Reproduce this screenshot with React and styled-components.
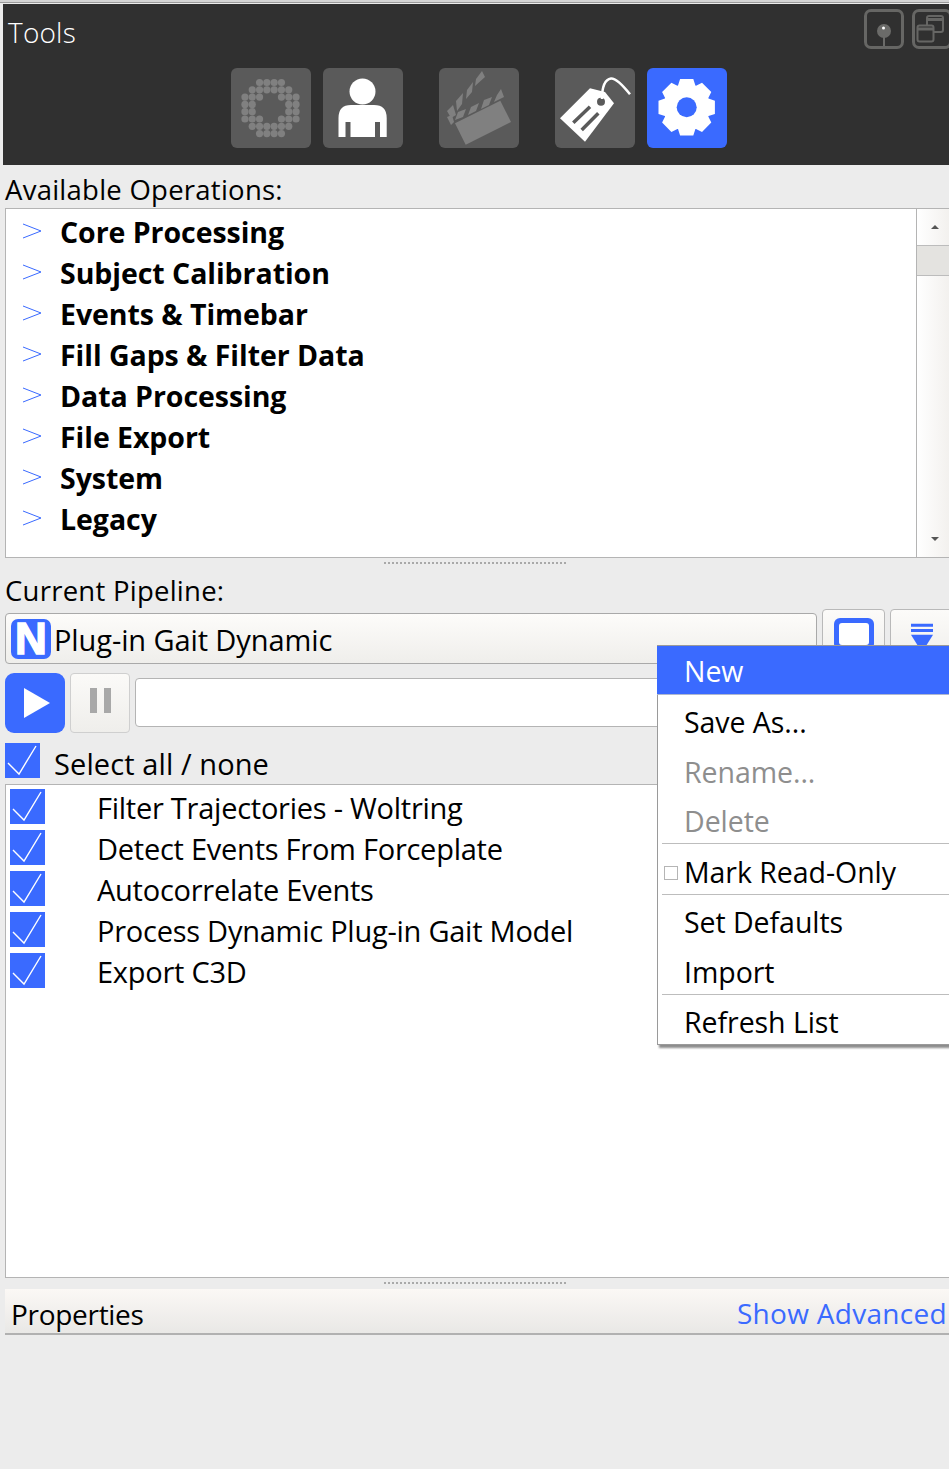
import React from "react";
import styled, { createGlobalStyle } from "styled-components";

const BLUE = "#3a6aff";
const FONT = `"Open Sans", "Noto Sans", sans-serif`;

const GlobalStyle = createGlobalStyle`
  html, body { margin: 0; padding: 0; background: #ececec; }
  body { font-family: ${FONT}; color: #000; overflow: hidden; }
  * { box-sizing: border-box; }
`;

const Page = styled.div`
  position: relative;
  width: 949px;
  height: 1469px;
  overflow: hidden;
  background: #ececec;
`;

const TopStrip = styled.div`
  height: 4px;
  background: linear-gradient(#d4d4d4 0, #d4d4d4 2px, #9b9b9b 2px, #9b9b9b 3px, #ececec 3px);
`;

const ToolsPanel = styled.section`
  height: 161px;
  margin-left: 3px;
  background: #303030;
  overflow: hidden;
`;

const ToolsHead = styled.div`
  display: flex;
  justify-content: space-between;
  height: 64px;
  padding: 5px 0 0 5px;
`;

const ToolsTitle = styled.h1`
  margin: -1px 0 0;
  font-size: 28px;
  font-weight: 300;
  line-height: 48px;
  color: #fff;
  letter-spacing: 0.2px;
`;

const WindowButtons = styled.div`
  display: flex;
  gap: 8px;
  margin-right: -3px;
`;

const WindowButton = styled.button`
  width: 40px;
  height: 40px;
  padding: 0;
  flex: none;
  background: transparent;
  border: 3px solid #666664;
  border-radius: 7px;
  svg { display: block; }
`;

const ToolRow = styled.div`
  display: flex;
  padding-left: 228px;
`;

const ToolButton = styled.button`
  width: 80px;
  height: 80px;
  padding: 0;
  flex: none;
  border: none;
  border-radius: 6px;
  margin-left: ${p => p.$gap}px;
  background: ${p => (p.$active ? BLUE : "#5a5a5a")};
  svg { display: block; }
`;

const Content = styled.main`
  padding-left: 5px;
`;

const SectionLabel = styled.div`
  font-size: 27.5px;
  line-height: 38px;
  letter-spacing: 0.25px;
  height: ${p => p.$h}px;
  padding-top: ${p => p.$top}px;
`;

const OperationsBox = styled.div`
  display: flex;
  width: 950px;
  height: 350px;
  background: #fff;
  border: 1px solid #b4b4b4;
`;

const OperationList = styled.ul`
  flex: 1;
  margin: 0;
  padding: 2px 0 0 16px;
  list-style: none;
`;

const OperationRow = styled.li`
  display: flex;
  align-items: center;
  gap: 18px;
  height: 41px;
  font-size: 28.5px;
  font-weight: 700;
  letter-spacing: -0.05px;
  svg { flex: none; margin-bottom: 1px; }
`;

const ScrollBar = styled.div`
  width: 37px;
  flex: none;
  display: flex;
  flex-direction: column;
  margin-right: 1px;
  border-left: 1px solid #b4b4b4;
  background: linear-gradient(90deg, #fff, #f1efec);
`;

const ScrollArrow = styled.div`
  height: ${p => p.$h}px;
  display: flex;
  align-items: center;
  justify-content: center;
  &::after {
    content: "";
    border-left: 4px solid transparent;
    border-right: 4px solid transparent;
    ${p => (p.$down ? "border-top: 4px solid #555;" : "border-bottom: 4px solid #555;")}
  }
`;

const ScrollThumb = styled.div`
  height: 31px;
  background: #e4e3e0;
  border-top: 1px solid #bcbcbc;
  border-bottom: 1px solid #bcbcbc;
`;

const ScrollSpacer = styled.div`
  flex: 1;
`;

const Splitter = styled.div`
  height: 10px;
  display: flex;
  justify-content: center;
  padding: 4px 2px 0 0;
  &::before {
    content: "";
    width: 184px;
    height: 2px;
    background: repeating-linear-gradient(90deg, #a9a9a9 0 2px, transparent 2px 4px);
  }
`;

const ComboRow = styled.div`
  display: flex;
  align-items: flex-start;
  height: 64px;
  margin-top: -4px;
`;

const Combo = styled.div`
  position: relative;
  display: flex;
  align-items: center;
  gap: 3px;
  flex: none;
  width: 812px;
  height: 51px;
  margin-top: 4px;
  padding: 1px 0 0 5px;
  border: 1px solid #a9a9a9;
  border-radius: 4px;
  background: linear-gradient(#fdfcfa, #efeeeb);
  font-size: 29px;
  letter-spacing: -0.1px;
`;

const NLogo = styled.span`
  display: flex;
  align-items: center;
  justify-content: center;
  width: 40px;
  height: 40px;
  flex: none;
  margin-top: -1px;
  background: ${BLUE};
  border-radius: 7px;
  border: 2px solid ${BLUE};
  color: #fff;
  font-family: "Liberation Sans", sans-serif;
  font-size: 44px;
  font-weight: 700;
  line-height: 36px;
  letter-spacing: 0;
  -webkit-text-stroke: 1.5px #fff;
`;

const ComboCaret = styled.svg`
  position: absolute;
  right: 6px;
  bottom: 8px;
`;

const SideButton = styled.button`
  display: flex;
  align-items: flex-start;
  justify-content: center;
  width: 63px;
  height: 55px;
  flex: none;
  margin-left: ${p => p.$gap}px;
  padding: 0;
  border: 1px solid #b9b9b9;
  border-radius: 4px;
  background: linear-gradient(#fcfbf9, #efeeeb);
  svg { display: block; }
`;

const RunRow = styled.div`
  display: flex;
  align-items: center;
  gap: 5px;
  height: 60px;
`;

const PlayButton = styled.button`
  width: 60px;
  height: 60px;
  flex: none;
  padding: 0 0 0 3px;
  border: none;
  border-radius: 9px;
  background: ${BLUE};
  svg { display: block; margin: auto; }
`;

const PauseButton = styled.button`
  display: flex;
  align-items: center;
  justify-content: center;
  gap: 7px;
  width: 60px;
  height: 60px;
  flex: none;
  padding: 0 0 5px;
  border: 1px solid #cfcfcf;
  border-radius: 4px;
  background: linear-gradient(#fbfaf8, #efeeeb);
  &::before, &::after {
    content: "";
    width: 7px;
    height: 25px;
    background: #a8a8a8;
  }
`;

const RunInput = styled.div`
  flex: none;
  width: 820px;
  height: 49px;
  margin-bottom: 1px;
  background: #fff;
  border: 1px solid #b4b4b4;
  border-radius: 4px;
`;

const CheckBox = styled.span`
  display: block;
  width: 35px;
  height: 35px;
  flex: none;
  background: ${BLUE};
  svg { display: block; }
`;

const SelectAll = styled.label`
  display: flex;
  align-items: center;
  height: 35px;
  margin-top: 10px;
  gap: 14px;
  font-size: 29px;
  letter-spacing: 0.1px;
`;

const SelectAllText = styled.span`
  padding-top: 6px;
`;

const StepBox = styled.div`
  width: 950px;
  height: 494px;
  margin-top: 6px;
  padding-top: 4px;
  background: #fff;
  border: 1px solid #b4b4b4;
`;

const StepRow = styled.div`
  display: flex;
  height: 41px;
  padding-left: 4px;
  gap: 52px;
  font-size: 29px;
  letter-spacing: -0.25px;
  line-height: 38px;
`;

const PropertiesBar = styled.div`
  display: flex;
  align-items: flex-end;
  justify-content: space-between;
  height: 46px;
  margin-top: 1px;
  padding: 0 2px 0 6px;
  border-bottom: 2px solid #b1b1b1;
  background: linear-gradient(#fbf8f5, #e9e8e6);
  font-size: 28px;
  letter-spacing: -0.3px;
  line-height: 37px;
`;

const AdvancedLink = styled.a`
  color: ${BLUE};
  line-height: 40px;
  letter-spacing: 0.3px;
`;

const Menu = styled.div`
  position: absolute;
  top: 645px;
  left: 657px;
  width: 296px;
  height: 400px;
  display: flex;
  flex-direction: column;
  background: #fff;
  border: 1px solid #9a9a9a;
  box-shadow: 2px 3px 2px rgba(0, 0, 0, 0.45);
  font-size: 28.5px;
  letter-spacing: -0.05px;
`;

const MenuHighlight = styled.div`
  display: flex;
  align-items: center;
  flex: none;
  height: 49px;
  margin: 0 0 0 -1px;
  padding: 2px 0 0 27px;
  background: ${BLUE};
  background-clip: padding-box;
  color: #fff;
  border-bottom: 1px solid #aeb7cf;
`;

const MenuItem = styled.div`
  position: relative;
  display: flex;
  align-items: center;
  flex: none;
  height: ${p => p.$h || 44}px;
  margin-top: ${p => p.$top}px;
  padding-left: 26px;
  color: ${p => (p.$disabled ? "#8e8e8e" : "#000")};
`;

const MenuCheck = styled.span`
  position: absolute;
  left: 6px;
  top: 17px;
  width: 14px;
  height: 14px;
  border: 1px solid #b5b5b5;
`;

const MenuSep = styled.div`
  flex: none;
  height: 1px;
  margin-left: 4px;
  background: #bdbdbd;
`;

const operations = [
  "Core Processing",
  "Subject Calibration",
  "Events & Timebar",
  "Fill Gaps & Filter Data",
  "Data Processing",
  "File Export",
  "System",
  "Legacy",
];

const steps = [
  "Filter Trajectories - Woltring",
  "Detect Events From Forceplate",
  "Autocorrelate Events",
  "Process Dynamic Plug-in Gait Model",
  "Export C3D",
];

// rows of the camera ring, x offsets from the centre in half-steps
const ringRows = [
  [-3, -1, 1, 3],
  [-5, -3, -1, 1, 3, 5],
  [-7, -5, -3, 3, 5, 7],
  [-7, -5, 5, 7],
  [-7, -5, 5, 7],
  [-7, -5, -3, 3, 5, 7],
  [-5, -3, -1, 1, 3, 5],
  [-3, -1, 1, 3],
];

const RingIcon = () => (
  <svg width="80" height="80" viewBox="0 0 80 80">
    {ringRows.map((row, r) =>
      row.map(x => (
        <circle key={`${r}-${x}`} cx={39.5 + x * 3.65} cy={14.5 + r * 7.3} r="3.6" fill="#808080" />
      ))
    )}
  </svg>
);

const PersonIcon = () => (
  <svg width="80" height="80" viewBox="0 0 80 80">
    <circle cx="39.5" cy="23.5" r="13" fill="#fff" />
    <path
      d="M15.5 69V50Q15.5 37 28 37H51Q63.7 37 63.7 50V69H57V54H52V69H27.5V54H22.5V69Z"
      fill="#fff"
    />
  </svg>
);

const ClapperIcon = () => (
  <svg width="80" height="80" viewBox="0 0 80 80">
    <path d="M16 55.3L61.3 32.7L72 54L26.7 76.7Z" fill="#808080" />
    <path d="M8 49L13 47L15 54L12 57ZM19 44L27 41L24 49L16 52ZM32 39L40 35L37 43L29 47ZM45 32L53 29L50 37L42 41ZM58 27L62 21L65 29L55 34Z" fill="#808080" />
    <path d="M8 43L14 37L17 47L12 50ZM17 33L24 25L23 36L18 43ZM28 22L34 14L33 24L27 31ZM37 11L43 3L46 9L36 18Z" fill="#808080" />
  </svg>
);

const TagIcon = () => (
  <svg width="80" height="80" viewBox="0 0 80 80">
    <path
      d="M5 50.3L35 20.3L50 24L59 35.3L30 73.7Z"
      fill="#fff"
    />
    <circle cx="46" cy="33.7" r="4" fill="#5a5a5a" />
    <path d="M18.3 54.7L35 38.7M26.7 62L43.3 45.3" stroke="#5a5a5a" strokeWidth="3.5" />
    <path d="M47 31Q47 12 56 10.5Q62 10 75 26.3" fill="none" stroke="#fff" strokeWidth="2.5" />
  </svg>
);

// eight toothed gear, centred on the button
const gearPoints = () => {
  const pts = [];
  for (let i = 0; i < 8; i++) {
    const a = (i * Math.PI) / 4 - Math.PI / 2;
    const spread = [-0.38, -0.23, 0.23, 0.38];
    const radius = [23.5, 29, 29, 23.5];
    spread.forEach((s, k) => {
      pts.push(`${(39.7 + radius[k] * Math.cos(a + s)).toFixed(1)},${(39.3 + radius[k] * Math.sin(a + s)).toFixed(1)}`);
    });
  }
  return pts.join(" ");
};

const GearIcon = () => (
  <svg width="80" height="80" viewBox="0 0 80 80">
    <polygon points={gearPoints()} fill="#fff" />
    <circle cx="39.7" cy="39.3" r="10" fill={BLUE} />
  </svg>
);

const PinIcon = () => (
  <svg width="34" height="34" viewBox="0 0 34 34">
    <circle cx="17" cy="19" r="7" fill="#6b6b69" />
    <circle cx="16.5" cy="16" r="1.5" fill="#fff" />
    <path d="M17 24V34" stroke="#6b6b69" strokeWidth="2" />
  </svg>
);

const RestoreIcon = () => (
  <svg width="34" height="34" viewBox="0 0 34 34">
    <rect x="12" y="4" width="16" height="16" rx="2" fill="#303030" stroke="#666664" strokeWidth="2" />
    <path d="M12 7.5H28" stroke="#666664" strokeWidth="3" />
    <rect x="2.5" y="13.5" width="16" height="16" rx="2" fill="#303030" stroke="#666664" strokeWidth="2" />
    <path d="M2.5 17H18.5" stroke="#666664" strokeWidth="3" />
  </svg>
);

const Chevron = () => (
  <svg width="20" height="16" viewBox="0 0 20 16">
    <path d="M1 1L19 8L1 15" fill="none" stroke={BLUE} strokeWidth="1" />
  </svg>
);

const Check = () => (
  <svg width="35" height="35" viewBox="0 0 35 35">
    <path d="M3 20L14 31L31 3" fill="none" stroke="#fff" strokeWidth="1.4" />
  </svg>
);

const SaveIcon = () => (
  <svg width="40" height="40" viewBox="0 0 40 40">
    <rect x="0" y="8" width="40" height="32" rx="6" fill={BLUE} />
    <rect x="5" y="13" width="30" height="22" rx="3" fill="#fff" />
  </svg>
);

const LoadIcon = () => (
  <svg width="24" height="40" viewBox="0 0 24 40">
    <path d="M1 15.2H23M1 20.5H23" stroke={BLUE} strokeWidth="3" />
    <path d="M1 24.7H23L16 36H8Z" fill={BLUE} />
  </svg>
);

export default function App() {
  return (
    <Page>
      <GlobalStyle />
      <TopStrip />
      <ToolsPanel>
        <ToolsHead>
          <ToolsTitle>Tools</ToolsTitle>
          <WindowButtons>
            <WindowButton><PinIcon /></WindowButton>
            <WindowButton><RestoreIcon /></WindowButton>
          </WindowButtons>
        </ToolsHead>
        <ToolRow>
          <ToolButton $gap={0}><RingIcon /></ToolButton>
          <ToolButton $gap={12}><PersonIcon /></ToolButton>
          <ToolButton $gap={36}><ClapperIcon /></ToolButton>
          <ToolButton $gap={36}><TagIcon /></ToolButton>
          <ToolButton $gap={12} $active><GearIcon /></ToolButton>
        </ToolRow>
      </ToolsPanel>

      <Content>
        <SectionLabel $h={43} $top={6}>Available Operations:</SectionLabel>
        <OperationsBox>
          <OperationList>
            {operations.map(op => (
              <OperationRow key={op}>
                <Chevron />
                {op}
              </OperationRow>
            ))}
          </OperationList>
          <ScrollBar>
            <ScrollArrow $h={36} />
            <ScrollThumb />
            <ScrollSpacer />
            <ScrollArrow $h={36} $down />
          </ScrollBar>
        </OperationsBox>
        <Splitter />
        <SectionLabel $h={45} $top={4}>Current Pipeline:</SectionLabel>
        <ComboRow>
          <Combo>
            <NLogo>N</NLogo>
            Plug-in Gait Dynamic
            <ComboCaret width="10" height="6" viewBox="0 0 10 6">
              <path d="M1 1L5 5L9 1" fill="none" stroke={BLUE} strokeWidth="1" />
            </ComboCaret>
          </Combo>
          <SideButton $gap={5}><SaveIcon /></SideButton>
          <SideButton $gap={5}><LoadIcon /></SideButton>
        </ComboRow>
        <RunRow>
          <PlayButton>
            <svg width="26" height="30" viewBox="0 0 26 30"><path d="M0 0L26 15L0 30Z" fill="#fff" /></svg>
          </PlayButton>
          <PauseButton />
          <RunInput />
        </RunRow>
        <SelectAll>
          <CheckBox><Check /></CheckBox>
          <SelectAllText>Select all / none</SelectAllText>
        </SelectAll>
        <StepBox>
          {steps.map(step => (
            <StepRow key={step}>
              <CheckBox><Check /></CheckBox>
              {step}
            </StepRow>
          ))}
        </StepBox>
        <Splitter />
        <PropertiesBar>
          <span>Properties</span>
          <AdvancedLink>Show Advanced</AdvancedLink>
        </PropertiesBar>
      </Content>

      <Menu>
        <MenuHighlight>New</MenuHighlight>
        <MenuItem $top={5}>Save As...</MenuItem>
        <MenuItem $top={6} $disabled>Rename...</MenuItem>
        <MenuItem $top={5} $disabled>Delete</MenuItem>
        <MenuSep />
        <MenuItem $top={5} $h={45}><MenuCheck />Mark Read-Only</MenuItem>
        <MenuSep />
        <MenuItem $top={5}>Set Defaults</MenuItem>
        <MenuItem $top={5} $h={45}>Import</MenuItem>
        <MenuSep />
        <MenuItem $top={5}>Refresh List</MenuItem>
      </Menu>
    </Page>
  );
}
